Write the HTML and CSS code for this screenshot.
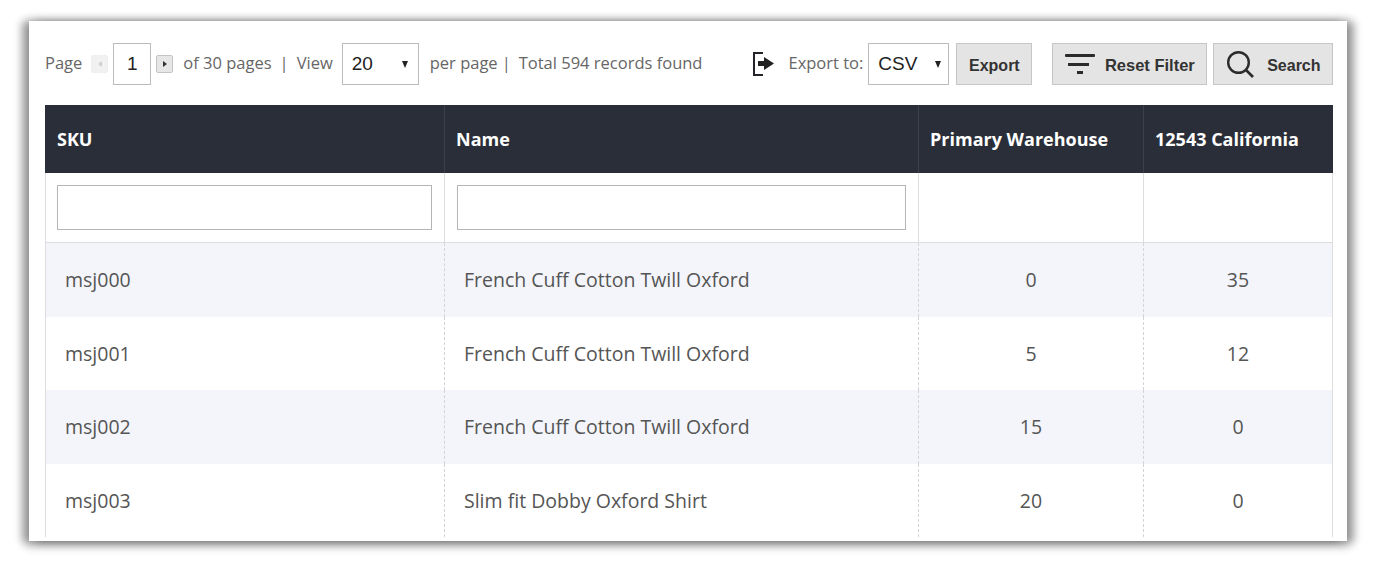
FILE: index.html
```html
<!DOCTYPE html>
<html lang="en">
<head>
  <meta charset="UTF-8" />
  <title>Inventory Grid</title>
  <link rel="stylesheet" href="styles.css">
</head>
<body>
  <div class="panel">
    <div class="toolbar">
      <div class="pager">
        <span>Page</span>
        <button class="page-arrow prev" aria-label="Previous page"><i></i></button>
        <input class="page-input" type="text" value="1" />
        <button class="page-arrow next" aria-label="Next page"><i></i></button>
        <span class="of-pages">of 30 pages</span>
        <span class="sep">|</span>
        <span>View</span>
        <div class="fake-select view-select"><span>20</span><i></i></div>
        <span>per page</span>
        <span class="sep sep-tight">|</span>
        <span>Total 594 records found</span>
      </div>
      <div class="export">
        <svg class="export-icon" width="22" height="24" viewBox="0 0 22 24">
          <path d="M10 1H1v22h9" fill="none" stroke="#23232b" stroke-width="2" />
          <path d="M5 9h6V5l10 6.5L11 18v-4H5z" fill="#222" />
        </svg>
        <span>Export to:</span>
        <div class="fake-select csv-select"><span>CSV</span><i></i></div>
        <button class="btn btn-export">Export</button>
      </div>
      <div class="actions">
        <button class="btn btn-reset">
          <svg width="30" height="22" viewBox="0 0 30 22">
            <rect x="0" y="1" width="30" height="3" rx="1" fill="#2b2b2b" />
            <rect x="3" y="10" width="21" height="3" fill="#2b2b2b" />
            <rect x="12" y="18" width="6" height="3" fill="#2b2b2b" />
          </svg>
          Reset Filter
        </button>
        <button class="btn btn-search">
          <svg width="27" height="27" viewBox="0 0 27 27">
            <circle cx="11.5" cy="11.5" r="10.3" fill="none" stroke="#2b2b2b" stroke-width="2.4" />
            <path d="M19 19l7 7" stroke="#2b2b2b" stroke-width="2.6" />
          </svg>
          Search
        </button>
      </div>
    </div>

    <table class="grid">
      <colgroup>
        <col class="col-sku" />
        <col class="col-name" />
        <col class="col-wh" />
        <col class="col-ca" />
      </colgroup>
      <thead>
        <tr>
          <th>SKU</th>
          <th>Name</th>
          <th>Primary Warehouse</th>
          <th>12543 California</th>
        </tr>
        <tr class="filters">
          <td><input type="text" /></td>
          <td><input type="text" /></td>
          <td></td>
          <td></td>
        </tr>
      </thead>
      <tbody>
        <tr>
          <td>msj000</td>
          <td>French Cuff Cotton Twill Oxford</td>
          <td class="num">0</td>
          <td class="num">35</td>
        </tr>
        <tr>
          <td>msj001</td>
          <td>French Cuff Cotton Twill Oxford</td>
          <td class="num">5</td>
          <td class="num">12</td>
        </tr>
        <tr>
          <td>msj002</td>
          <td>French Cuff Cotton Twill Oxford</td>
          <td class="num">15</td>
          <td class="num">0</td>
        </tr>
        <tr>
          <td>msj003</td>
          <td>Slim fit Dobby Oxford Shirt</td>
          <td class="num">20</td>
          <td class="num">0</td>
        </tr>
      </tbody>
    </table>
  </div>
</body>
</html>
```

FILE: styles.css
```css
html, body {
  height: 100%;
}
body {
  margin: 0;
  background: #fff;
  font-family: "Open Sans", Arial, sans-serif;
  color: #555;
  overflow: hidden;
}
.panel {
  margin: 21px 29px 0;
  height: 520px;
  padding: 22px 14px 0 16px;
  box-sizing: border-box;
  background: #fff;
  box-shadow: -8px 1px 8px rgba(0, 0, 0, 0.24), 8px 1px 8px rgba(0, 0, 0, 0.24), 0 2px 9px 3px rgba(0, 0, 0, 0.3);
  overflow: hidden;
}
.toolbar {
  display: flex;
  align-items: center;
  height: 42px;
  font-size: 16.5px;
  color: #666;
  white-space: nowrap;
}
.pager, .export, .actions {
  display: flex;
  align-items: center;
  height: 100%;
}
.pager > span {
  margin-top: -3px;
}
.page-arrow {
  width: 17px;
  height: 18px;
  padding: 0;
  margin: 0 0 0 9px;
  display: flex;
  align-items: center;
  justify-content: center;
  background: #e6e6e6;
  border: 1px solid #c4c4c4;
  border-radius: 2px;
}
.page-arrow i {
  width: 0;
  height: 0;
  border-top: 3.5px solid transparent;
  border-bottom: 3.5px solid transparent;
}
.prev {
  opacity: 0.55;
  border-color: #e2e2e2;
}
.prev i {
  border-right: 4px solid #aaa;
}
.next {
  margin-left: 5px;
}
.next i {
  border-left: 4px solid #333;
}
.page-input {
  width: 38px;
  height: 42px;
  margin-left: 5px;
  padding: 0;
  box-sizing: border-box;
  border: 1px solid #bbb;
  text-align: center;
  font-family: "Liberation Sans", Arial, sans-serif;
  font-size: 19px;
  color: #222;
}
.of-pages {
  margin-left: 10px;
}
.sep {
  margin: 0 8px;
}
.sep-tight {
  margin: 0 8px 0 4px;
}
.fake-select {
  display: flex;
  align-items: center;
  justify-content: space-between;
  height: 42px;
  box-sizing: border-box;
  border: 1px solid #bbb;
  background: #fff;
  font-family: "Liberation Sans", Arial, sans-serif;
  font-size: 19px;
  color: #222;
}
.fake-select i {
  width: 0;
  height: 0;
  border-left: 3.5px solid transparent;
  border-right: 3.5px solid transparent;
  border-top: 7px solid #222;
}
.view-select {
  width: 77px;
  margin: 0 11px 0 9px;
  padding: 0 10px 0 9px;
}
.export {
  margin-left: 51px;
}
.export-icon {
  margin-right: 13px;
}
.export > span {
  margin-top: -3px;
}
.csv-select {
  width: 81px;
  margin-left: 5px;
  padding: 0 7px 0 9px;
}
.btn {
  display: flex;
  align-items: center;
  justify-content: center;
  height: 42px;
  padding: 3px 0 0;
  background: #e4e4e4;
  border: 1px solid #c6c6c6;
  font-family: "Liberation Sans", Arial, sans-serif;
  font-size: 16px;
  font-weight: bold;
  color: #333;
}
.btn svg {
  margin-top: -3px;
}
.btn-export {
  width: 76px;
  margin-left: 7px;
}
.actions {
  margin-left: 20px;
  gap: 6px;
}
.btn-reset {
  width: 155px;
  gap: 10px;
  font-size: 16.5px;
}
.btn-search {
  width: 120px;
  gap: 13px;
  padding-left: 1px;
}
.grid {
  width: 1288px;
  margin-top: 20px;
  table-layout: fixed;
  border-collapse: separate;
  border-spacing: 0;
}
.col-sku { width: 399px; }
.col-name { width: 474px; }
.col-wh { width: 225px; }
.col-ca { width: 190px; }
.grid th {
  height: 68px;
  padding: 0 11px;
  box-sizing: border-box;
  background: #2a2e38;
  border-left: 1px solid #3c404a;
  color: #fff;
  font-size: 18px;
  font-weight: 700;
  text-align: left;
  white-space: nowrap;
}
.grid th:first-child {
  border-left: 0;
  padding-left: 12px;
}
.filters td {
  height: 70px;
  padding: 0 12px 0 11px;
  box-sizing: border-box;
  border-left: 1px solid #ddd;
  border-bottom: 1px solid #ddd;
}
.filters td + td {
  padding-left: 12px;
}
.filters td:last-child {
  border-right: 1px solid #ddd;
}
.filters input {
  display: block;
  width: 100%;
  height: 45px;
  box-sizing: border-box;
  border: 1px solid #b5b5b5;
  background: #fff;
}
.grid tbody td {
  height: 73.5px;
  padding: 0 19px;
  box-sizing: border-box;
  border-left: 1px dashed #d4d4d4;
  font-size: 19.5px;
  color: #555;
}
.grid tbody td:first-child {
  border-left: 1px solid #ddd;
}
.grid tbody td:last-child {
  border-right: 1px solid #ddd;
}
.grid tbody tr:nth-child(odd) td {
  background: #f4f5fa;
}
.grid tbody .num {
  text-align: center;
}
```
